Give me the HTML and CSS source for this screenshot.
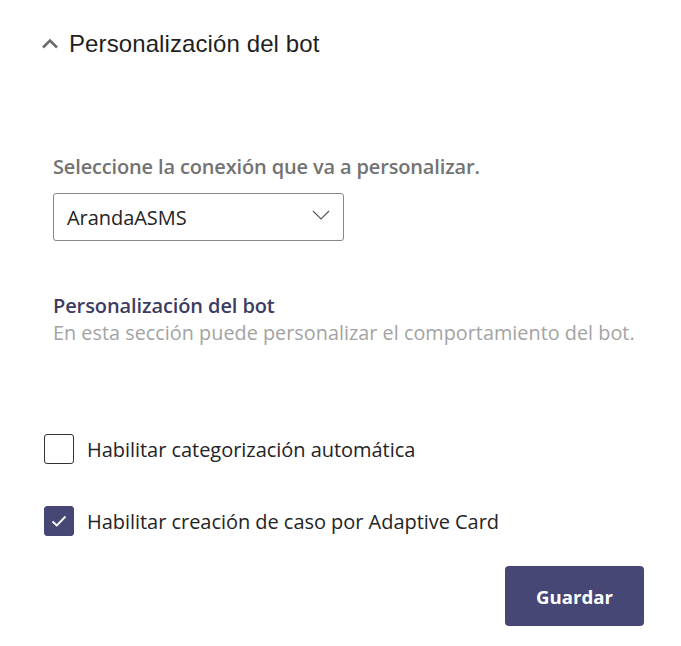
FILE: index.html
```html
<!DOCTYPE html>
<html lang="es">
<head>
<meta charset="utf-8">
<link rel="stylesheet" href="styles.css">
</head>
<body>
<div class="page">
  <div class="section-head">
    <svg class="caret" width="18" height="11" viewBox="0 0 18 11"><path d="M2 9.5 L9 2.5 L16 9.5" fill="none" stroke="#6b6b6b" stroke-width="2.6"/></svg>
    <span class="section-title">Personalización del bot</span>
  </div>
  <div class="content">
    <div class="field-label">Seleccione la conexión que va a personalizar.</div>
    <div class="select">
      <span class="select-value">ArandaASMS</span>
      <svg class="select-chevron" width="18" height="10" viewBox="0 0 18 10"><path d="M1 1 L9 9 L17 1" fill="none" stroke="#555" stroke-width="1.1"/></svg>
    </div>
    <div class="sub-title">Personalización del bot</div>
    <div class="sub-desc">En esta sección puede personalizar el comportamiento del bot.</div>
  </div>
  <div class="checks">
    <label class="check-row">
      <span class="box"></span>
      <span class="check-label">Habilitar categorización automática</span>
    </label>
    <label class="check-row">
      <span class="box checked"><svg width="16" height="12" viewBox="0 0 16 12"><path d="M1.5 6.5 L5.8 10.5 L14.5 1.5" fill="none" stroke="#fff" stroke-width="1.8"/></svg></span>
      <span class="check-label">Habilitar creación de caso por Adaptive Card</span>
    </label>
  </div>
  <div class="actions">
    <button class="btn-primary">Guardar</button>
  </div>
</div>
</body>
</html>
```
FILE: styles.css
```css
* { box-sizing: border-box; }
html, body { margin: 0; padding: 0; background: #fff; }
body { font-family: "Open Sans", "Noto Sans", sans-serif; color: #252424; }
.page { width: 681px; height: 646px; padding: 30px 37px 0 44px; }
.section-head { display: flex; align-items: center; height: 28px; margin-left: -3px; }
.caret { margin-right: 10px; margin-top: -1px; }
.section-title { font-family: "Liberation Sans", Arial, sans-serif; font-size: 24px; letter-spacing: 0.1px; color: #1f1f1f; }
.content { padding-left: 9px; margin-top: 95px; }
.field-label { font-size: 20px; font-weight: 600; color: #737373; letter-spacing: -0.15px; line-height: 28px; }
.select { margin-top: 12px; width: 291px; height: 48px; border: 1px solid #8a8886; border-radius: 3px; display: flex; align-items: center; justify-content: space-between; padding: 0 13px 0 13px; }
.select-value { font-size: 20px; color: #252424; letter-spacing: -0.05px; }
.select-chevron { margin-top: -4px; }
.sub-title { margin-top: 51px; font-size: 20px; font-weight: 600; color: #3d3c63; line-height: 27px; letter-spacing: -0.1px; }
.sub-desc { font-size: 19.8px; color: #a3a3a3; line-height: 27px; letter-spacing: 0.03px; }
.checks { margin-top: 88px; display: flex; flex-direction: column; gap: 42px; }
.check-row { display: flex; align-items: center; }
.box { width: 30px; height: 30px; border: 1px solid #333; border-radius: 3px; display: flex; align-items: center; justify-content: center; margin-right: 13px; }
.box.checked { background: #464775; border-color: #464775; }
.check-label { font-size: 20px; color: #252424; letter-spacing: -0.04px; }
.actions { display: flex; justify-content: flex-end; margin-top: 30px; }
.btn-primary { width: 139px; height: 60px; background: #464775; color: #fff; border: none; border-radius: 4px; font-family: "Open Sans", sans-serif; font-size: 18.6px; font-weight: 700; letter-spacing: 0; }
```
